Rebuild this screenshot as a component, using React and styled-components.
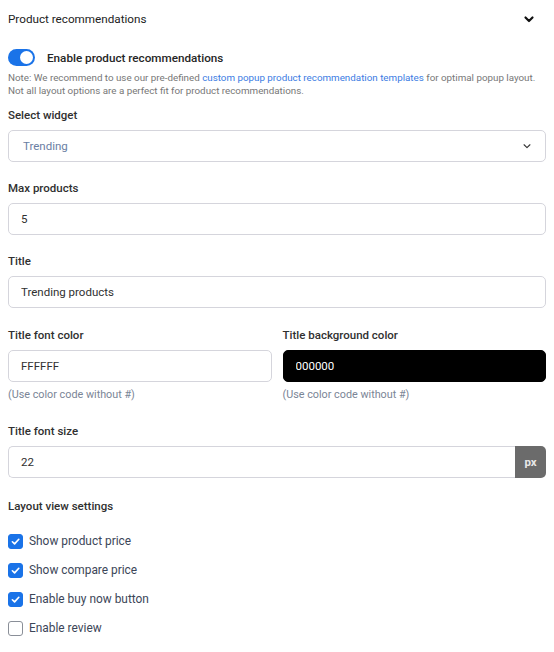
import React, { useState } from 'react';
import styled, { createGlobalStyle } from 'styled-components';

const GlobalStyle = createGlobalStyle`
  * { box-sizing: border-box; }
  body {
    margin: 0;
    background: #fff;
    font-family: Roboto, "Liberation Sans", Arial, sans-serif;
    color: #303030;
  }
`;

function ChevronDown({ size = 12, stroke = 2 }) {
  return (
    <svg width={size} height={size} viewBox="0 0 12 12" fill="none">
      <path d="M2.5 4.5 L6 8 L9.5 4.5" stroke="currentColor" strokeWidth={stroke} strokeLinecap="round" strokeLinejoin="round" />
    </svg>
  );
}

function CheckMark() {
  return (
    <svg width="11" height="11" viewBox="0 0 12 12" fill="none">
      <path d="M2.6 6.3 L5 8.6 L9.6 3.6" stroke="#fff" strokeWidth="1.8" strokeLinecap="round" strokeLinejoin="round" />
    </svg>
  );
}

function App() {
  const [enabled, setEnabled] = useState(true);
  const [checks, setChecks] = useState({
    price: true,
    compare: true,
    buyNow: true,
    review: false,
  });

  const toggleCheck = (key) => {
    setChecks({ ...checks, [key]: !checks[key] });
  };

  const options = [
    { key: 'price', label: 'Show product price' },
    { key: 'compare', label: 'Show compare price' },
    { key: 'buyNow', label: 'Enable buy now button' },
    { key: 'review', label: 'Enable review' },
  ];

  return (
    <Panel>
      <GlobalStyle />
      <Header>
        <HeaderTitle>Product recommendations</HeaderTitle>
        <HeaderIcon><ChevronDown size={12} stroke={2.2} /></HeaderIcon>
      </Header>

      <ToggleRow onClick={() => setEnabled(!enabled)}>
        <Switch on={enabled}><Knob on={enabled} /></Switch>
        <ToggleLabel>Enable product recommendations</ToggleLabel>
      </ToggleRow>
      <Note>
        Note: We recommend to use our pre-defined <NoteLink>custom popup product recommendation templates</NoteLink> for optimal popup layout.
        <br />
        Not all layout options are a perfect fit for product recommendations.
      </Note>

      <Field>
        <Label>Select widget</Label>
        <SelectBox>
          <SelectValue>Trending</SelectValue>
          <SelectIcon><ChevronDown size={10} stroke={1.3} /></SelectIcon>
        </SelectBox>
      </Field>

      <Field>
        <Label>Max products</Label>
        <Input defaultValue="5" />
      </Field>

      <Field>
        <Label>Title</Label>
        <Input defaultValue="Trending products" />
      </Field>

      <Columns>
        <div>
          <Label>Title font color</Label>
          <Input defaultValue="FFFFFF" />
          <Help>(Use color code without #)</Help>
        </div>
        <div>
          <Label>Title background color</Label>
          <Input dark defaultValue="000000" />
          <Help>(Use color code without #)</Help>
        </div>
      </Columns>

      <SizeField>
        <Label>Title font size</Label>
        <InputGroup>
          <GroupInput defaultValue="22" />
          <Addon>px</Addon>
        </InputGroup>
      </SizeField>

      <SectionTitle>Layout view settings</SectionTitle>
      <CheckList>
        {options.map((o) => (
          <CheckRow key={o.key} onClick={() => toggleCheck(o.key)}>
            <Box checked={checks[o.key]}>{checks[o.key] && <CheckMark />}</Box>
            <CheckLabel>{o.label}</CheckLabel>
          </CheckRow>
        ))}
      </CheckList>
    </Panel>
  );
}

const Panel = styled.div`
  padding: 0 8px;
  width: 554px;
`;

const Header = styled.div`
  display: flex;
  align-items: center;
  justify-content: space-between;
  height: 38px;
`;

const HeaderTitle = styled.div`
  font-size: 11.7px;
  color: #222;
`;

const HeaderIcon = styled.span`
  display: flex;
  color: #111;
  margin-right: 11px;
`;

const ToggleRow = styled.div`
  display: flex;
  align-items: center;
  gap: 12px;
  margin-top: 11px;
  cursor: pointer;
`;

const Switch = styled.div`
  width: 27px;
  height: 17px;
  border-radius: 9px;
  background: ${props => props.on ? '#1a73e8' : '#c4c4c4'};
  display: flex;
  align-items: center;
  justify-content: ${props => props.on ? 'flex-end' : 'flex-start'};
  padding: 0 2px;
`;

const Knob = styled.div`
  width: 13px;
  height: 13px;
  border-radius: 50%;
  background: #fff;
`;

const ToggleLabel = styled.span`
  font-size: 11.7px;
  font-weight: 500;
  color: #262626;
`;

const Note = styled.div`
  margin-top: 5px;
  font-size: 9.8px;
  line-height: 13px;
  color: #777;
  white-space: nowrap;
`;

const NoteLink = styled.span`
  color: #3b7ce3;
`;

const Field = styled.div`
  margin-top: 10px;
  & + & {
    margin-top: 18px;
  }
`;

const Label = styled.div`
  font-size: 11.5px;
  font-weight: 500;
  color: #303030;
  line-height: 16px;
  margin-bottom: 7px;
`;

const SelectBox = styled.div`
  display: flex;
  align-items: center;
  justify-content: space-between;
  height: 32px;
  border: 1px solid #d5d5dc;
  border-radius: 5px;
  padding: 0 13px 0 14px;
`;

const SelectValue = styled.span`
  font-size: 11.5px;
  color: #6a7ea3;
`;

const SelectIcon = styled.span`
  display: flex;
  color: #333;
`;

const Input = styled.input`
  display: block;
  width: 100%;
  height: 32px;
  border: 1px solid ${props => props.dark ? '#000' : '#d5d5dc'};
  border-radius: 5px;
  padding: 0 12px;
  font-family: inherit;
  font-size: 11.5px;
  color: ${props => props.dark ? '#fff' : '#303030'};
  background: ${props => props.dark ? '#000' : '#fff'};
  outline: none;
`;

const Columns = styled.div`
  display: grid;
  grid-template-columns: 1fr 1fr;
  gap: 11px;
  margin-top: 19px;
`;

const Help = styled.div`
  margin-top: 7px;
  font-size: 10.8px;
  line-height: 12px;
  color: #7a8596;
`;

const SizeField = styled.div`
  margin-top: 22px;
`;

const InputGroup = styled.div`
  display: flex;
  height: 32px;
`;

const GroupInput = styled(Input)`
  flex: 1;
  border-radius: 5px 0 0 5px;
  border-right: none;
`;

const Addon = styled.div`
  width: 31px;
  display: flex;
  align-items: center;
  justify-content: center;
  background: #6b6b6b;
  color: #e8e8e8;
  font-size: 11.5px;
  font-weight: 700;
  border-radius: 0 5px 5px 0;
`;

const SectionTitle = styled.div`
  margin-top: 20px;
  font-size: 11.5px;
  font-weight: 500;
  color: #303030;
  line-height: 16px;
`;

const CheckList = styled.div`
  display: flex;
  flex-direction: column;
  gap: 13px;
  margin-top: 19px;
`;

const CheckRow = styled.div`
  display: flex;
  align-items: center;
  gap: 6px;
  cursor: pointer;
  height: 16px;
`;

const Box = styled.div`
  width: 15px;
  height: 15px;
  border-radius: 3px;
  border: 1px solid ${props => props.checked ? '#1a73e8' : '#8a8f98'};
  background: ${props => props.checked ? '#1a73e8' : '#fff'};
  display: flex;
  align-items: center;
  justify-content: center;
`;

const CheckLabel = styled.span`
  font-size: 11.9px;
  color: #3c4658;
`;

export default App;
